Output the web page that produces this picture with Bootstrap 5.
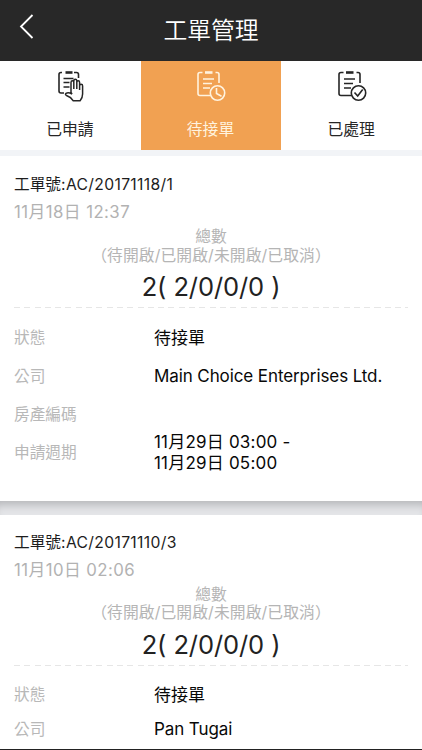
<!DOCTYPE html>
<html lang="zh-Hant">
<head>
<meta charset="utf-8">
<meta name="viewport" content="width=device-width, initial-scale=1">
<title>工單管理</title>
<link rel="stylesheet" href="https://cdn.jsdelivr.net/npm/bootstrap@5.3.0/dist/css/bootstrap.min.css">
<style>
body{font-family:Inter,"Noto Sans CJK TC",sans-serif;height:750px;color:#1d1d1d;background:#f2f4f7}
.topbar{height:61px;background:#282828;color:#fff}
.topbar h1{font-size:23.8px;font-weight:350;line-height:62px;width:100%}
.back{width:52px;height:61px;left:0;top:0}
.tabs{height:88.5px}
.tab{width:140.67px;color:#262626;font-size:15.8px;line-height:24px;background:#fff}
.tab.active{background:#f1a152;color:#fff3df}
.tab svg{margin-top:6px;width:38px;height:38px;fill:none;stroke:currentColor;stroke-width:1.6}
.tab span{margin-top:13px;margin-right:1px}
.order{padding:0 14px;background:#fff}
.order-a{margin-top:6.5px;height:344.5px}
.gap-band{height:14px;background:#e4e5e8;box-shadow:inset 0 9px 9px -5px #b6b7ba}
.order-b{height:234px}
.bottom-line{height:2px;background:#222}
.num{padding-top:17px;font-size:15.7px;line-height:24px}
.order-b .num{padding-top:16px}
.num span{letter-spacing:.33px}
.date{font-size:16.8px;line-height:24px;margin-top:3px;color:#b2b2b2;letter-spacing:.43px}
.hint{font-size:15.8px;line-height:18.5px;color:#b5b5b5;margin-top:4px}
.hint span{letter-spacing:.08px}
.total{font-size:25.5px;line-height:34px;margin-top:5px;color:#222;letter-spacing:-.1px}
.dash{height:1px;margin-top:3px;background:repeating-linear-gradient(90deg,#e6e6e6 0 6px,transparent 6px 10.3px)}
.fields{padding-top:11px}
.fieldrow{height:38.3px}
.order-b .fieldrow{height:34.5px}
.order-b .fields{padding-top:12.5px}
.key{width:140px;font-size:15.7px;color:#b8b8b8}
.val{font-size:17px;line-height:21px;color:#080808}
.val-latin{letter-spacing:-.1px}
.val-time{letter-spacing:.2px}
</style>
<script src="https://cdn.jsdelivr.net/npm/bootstrap@5.3.0/dist/js/bootstrap.bundle.min.js"></script>
</head>
<body class="overflow-hidden">
<header class="topbar position-relative text-center">
  <svg class="back position-absolute" viewBox="0 0 52 61" fill="none" stroke="#fff" stroke-width="1.8"><path d="M32.5 15 21 26.5 32.5 38"/></svg>
  <h1 class="m-0">工單管理</h1>
</header>
<nav class="tabs d-flex">
  <div class="tab d-flex flex-column align-items-center"><svg viewBox="0 0 38 38"><path d="M11 5.500h-1q-2 0-2 2V24q0 2 2 2h3M23 5.500h2.500q2 0 2 2V11M12.500 11.500h10M12.500 15.500h6M12.500 20h6"/><path stroke-width="2.600" d="M14.500 5.500h7"/><path fill="#fff" stroke-width="1.500" d="M20 25.500V15.500q0-1.700 1.400-1.700t1.400 1.700V22v-8q0-1.700 1.500-1.700t1.500 1.700v8-6.500q0-1.700 1.400-1.700t1.400 1.700V23v-4q0-1.700 1.500-1.700t1.500 1.700v8q0 4-2.500 6.800h-6.800q-2.300-3.800-6.800-5.300-1.800-1-.5-2.200 2.500-1.300 6 .7z"/></svg><span>已申請</span></div>
  <div class="tab active d-flex flex-column align-items-center"><svg viewBox="0 0 38 38"><path d="M10.500 5.500H8q-2 0-2 2v19q0 2 2 2h10M23.500 5.500H25q2 0 2 2V16M11 12h11M11 16.500h9M11 21h7"/><path stroke-width="2.600" d="M13 5.500h7.500"/><circle cx="25.500" cy="26" r="7.200"/><path d="M24.500 21v5.500l5 2.700"/></svg><span>待接單</span></div>
  <div class="tab d-flex flex-column align-items-center"><svg viewBox="0 0 38 38"><path d="M10.500 5.500H8q-2 0-2 2v19q0 2 2 2h10M23.500 5.500H25q2 0 2 2V16M11 12h11M11 16.500h9M11 21h7"/><path stroke-width="2.600" d="M13 5.500h7.500"/><circle cx="25.500" cy="26" r="7.200"/><path d="m21.500 25.500 3.200 3.500 5-6.500"/></svg><span>已處理</span></div>
</nav>
<main>
  <section class="order order-a">
    <div class="num">工單號<span>:AC/20171118/1</span></div>
    <div class="date">11月18日 12:37</div>
    <div class="hint text-center">總數<br><span>（待開啟/已開啟/未開啟/已取消）</span></div>
    <div class="total text-center">2( 2/0/0/0 )</div>
    <div class="dash"></div>
    <div class="fields">
      <div class="fieldrow d-flex align-items-center"><div class="key">狀態</div><div class="val">待接單</div></div>
      <div class="fieldrow d-flex align-items-center"><div class="key">公司</div><div class="val val-latin">Main Choice Enterprises Ltd.</div></div>
      <div class="fieldrow d-flex align-items-center"><div class="key">房產編碼</div><div class="val"></div></div>
      <div class="fieldrow d-flex align-items-center"><div class="key">申請週期</div><div class="val val-time">11月29日 03:00 -<br>11月29日 05:00</div></div>
    </div>
  </section>
  <div class="gap-band"></div>
  <section class="order order-b">
    <div class="num">工單號<span>:AC/20171110/3</span></div>
    <div class="date">11月10日 02:06</div>
    <div class="hint text-center">總數<br><span>（待開啟/已開啟/未開啟/已取消）</span></div>
    <div class="total text-center">2( 2/0/0/0 )</div>
    <div class="dash"></div>
    <div class="fields">
      <div class="fieldrow d-flex align-items-center"><div class="key">狀態</div><div class="val">待接單</div></div>
      <div class="fieldrow d-flex align-items-center"><div class="key">公司</div><div class="val val-latin">Pan Tugai</div></div>
    </div>
  </section>
  <div class="bottom-line"></div>
</main>
</body>
</html>
